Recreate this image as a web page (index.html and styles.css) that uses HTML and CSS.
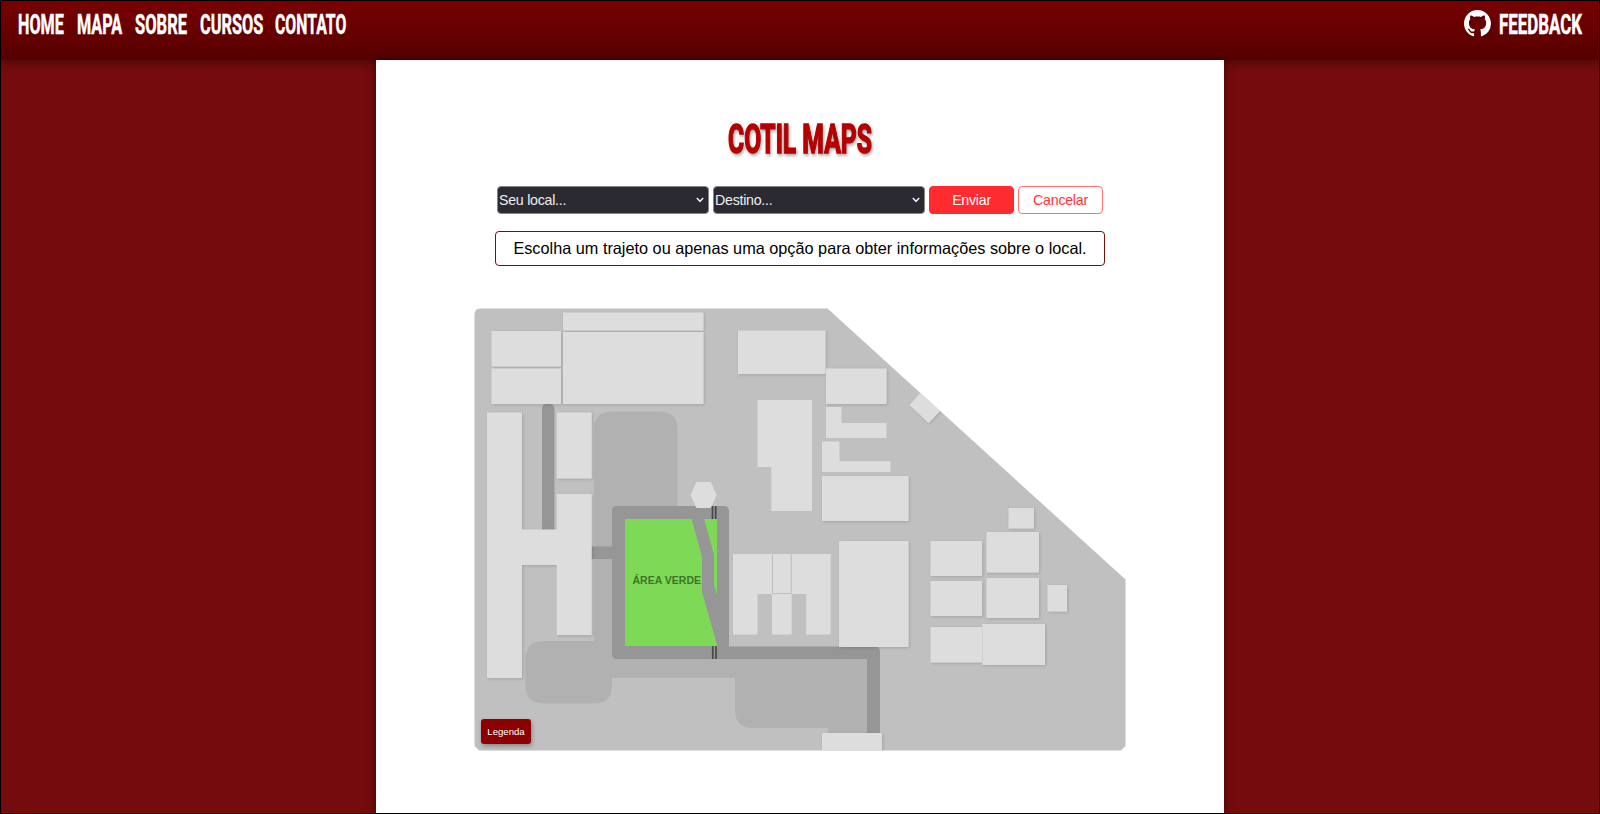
FILE: index.html
```
<!DOCTYPE html>
<html lang="pt-BR">
<head>
<meta charset="utf-8">
<title>Cotil Maps</title>
<link rel="stylesheet" href="styles.css">
</head>
<body>
<header class="topbar">
  <nav class="menu">
    <a><svg class="label" width="46" height="28"><text x="0" y="24" transform="scale(.62 1)" textLength="74" lengthAdjust="spacingAndGlyphs">HOME</text></svg></a>
    <a><svg class="label" width="45" height="28"><text x="0" y="24" transform="scale(.62 1)" textLength="73" lengthAdjust="spacingAndGlyphs">MAPA</text></svg></a>
    <a><svg class="label" width="52" height="28"><text x="0" y="24" transform="scale(.62 1)" textLength="84" lengthAdjust="spacingAndGlyphs">SOBRE</text></svg></a>
    <a><svg class="label" width="62" height="28"><text x="0" y="24" transform="scale(.62 1)" textLength="102" lengthAdjust="spacingAndGlyphs">CURSOS</text></svg></a>
    <a><svg class="label" width="72" height="28"><text x="0" y="24" transform="scale(.62 1)" textLength="115" lengthAdjust="spacingAndGlyphs">CONTATO</text></svg></a>
  </nav>
  <a class="feedback">
    <svg class="github" width="27" height="27" viewBox="0 0 16 16"><path fill="#fff" d="M8 0C3.58 0 0 3.58 0 8c0 3.54 2.29 6.53 5.47 7.59.4.07.55-.17.55-.38 0-.19-.01-.82-.01-1.49-2.01.37-2.53-.49-2.69-.94-.09-.23-.48-.94-.82-1.13-.28-.15-.68-.52-.01-.53.63-.01 1.08.58 1.23.82.72 1.21 1.87.87 2.33.66.07-.52.28-.87.51-1.07-1.78-.2-3.64-.89-3.64-3.95 0-.87.31-1.59.82-2.15-.08-.2-.36-1.02.08-2.12 0 0 .67-.21 2.2.82.64-.18 1.32-.27 2-.27s1.36.09 2 .27c1.53-1.04 2.2-.82 2.2-.82.44 1.1.16 1.92.08 2.12.51.56.82 1.27.82 2.15 0 3.07-1.87 3.75-3.65 3.95.29.25.54.73.54 1.48 0 1.07-.01 1.93-.01 2.2 0 .21.15.46.55.38A8.01 8.01 0 0 0 16 8c0-4.42-3.58-8-8-8z"/></svg>
    <svg class="label" width="84" height="28"><text x="0" y="24" transform="scale(.62 1)" textLength="134" lengthAdjust="spacingAndGlyphs">FEEDBACK</text></svg>
  </a>
</header>
<main class="page">
  <h1 class="title"><svg width="144" height="42"><text x="0" y="35" transform="scale(.62 1)" textLength="232" lengthAdjust="spacingAndGlyphs">COTIL MAPS</text></svg></h1>
  <form class="route">
    <div class="select">Seu local...<svg width="8" height="6"><path d="M.8 1 4 4.3 7.2 1"/></svg></div>
    <div class="select">Destino...<svg width="8" height="6"><path d="M.8 1 4 4.3 7.2 1"/></svg></div>
    <button type="button" class="btn send">Enviar</button>
    <button type="button" class="btn cancel">Cancelar</button>
  </form>
  <p class="hint">Escolha um trajeto ou apenas uma opção para obter informações sobre o local.</p>
  <div class="map">
    <svg class="plan" width="652" height="443" viewBox="474 308 652 443">
      <defs>
        <clipPath id="ground"><path d="M480.500 308.500H827.500L1125.500 579.500V746L1121 750.500H479L474.500 746V314.500Q474.500 308.500 480.500 308.500Z"/></clipPath>
        <filter id="soft" filterUnits="userSpaceOnUse" x="474" y="308" width="652" height="443"><feDropShadow dx="1" dy="1" stdDeviation="1.700" flood-opacity=".15"/></filter>
      </defs>
      <g clip-path="url(#ground)">
        <rect class="soil" x="474" y="308" width="652" height="443"/>
        <g class="yard">
          <path d="M594 430Q594 411.500 612.500 411.500H659Q677.500 411.500 677.500 430V510H650V650H867V733H828V728H753Q735 728 735 710V678H612V685Q612 703.500 594 703.500H544Q525.500 703.500 525.500 685V659Q525.500 641 544 641H594Z"/>
        </g>
        <g class="road">
          <path d="M542 530V409Q542 404 547 404H549.500Q554.500 404 554.500 409V530Z"/>
          <rect x="591" y="546.500" width="23" height="12.500"/>
          <path d="M617 506H724Q729 506 729 511V646.500H875Q880 646.500 880 651.500V734H867V659H617Q612 659 612 654V511Q612 506 617 506Z"/>
        </g>
        <rect class="grass" x="625" y="519" width="92" height="127"/>
        <text class="grass-name" x="632.500" y="584" textLength="68.500" lengthAdjust="spacingAndGlyphs">ÁREA VERDE</text>
        <path class="road" d="M691.500 518.500H704L714 555V585L717.500 597V646.500L702 592V557Z"/>
        <path class="rail" d="M712.500 506v13M715.700 506v13M712.800 646v13M716 646v13"/>
        <g class="building" filter="url(#soft)">
          <rect x="563" y="312.500" width="140.500" height="18"/>
          <rect x="563" y="332" width="140.500" height="72"/>
          <rect x="491.500" y="331" width="69.500" height="35.500"/>
          <rect x="491.500" y="368.500" width="69.500" height="35.500"/>
          <path d="M487 412.500h35v117h34.700V494h35v141h-35v-70h-34.700v113h-35z"/>
          <rect x="556.700" y="412.500" width="35" height="66"/>
          <rect x="738" y="330.500" width="87.500" height="43.500"/>
          <rect x="826" y="368.500" width="60.500" height="35.500"/>
          <rect x="822" y="476" width="86.500" height="45"/>
          <rect x="839" y="541" width="69.500" height="106"/>
          <path d="M909.500 405 928.500 423 945 406 924 389Z"/>
          <rect x="822" y="733" width="60" height="20"/>
          <rect x="930.500" y="541" width="51.500" height="35"/>
          <rect x="930.500" y="581" width="51.500" height="35"/>
          <rect x="930.500" y="627" width="51.500" height="35.500"/>
          <rect x="986.500" y="532" width="52.500" height="40.500"/>
          <rect x="986.500" y="578" width="52.500" height="40"/>
          <rect x="982.300" y="624" width="62.700" height="41"/>
          <rect x="1008.500" y="508" width="25.500" height="20.500"/>
          <rect x="1047.500" y="585" width="19.500" height="26.500"/>
        </g>
        <g class="building">
          <path d="M826 407h15.500v16h45v15H826z"/>
          <path d="M822 441.500h17.500v19.800h51V472H822z"/>
          <path d="M757.500 400H812v111h-40.700v-44h-13.800z"/>
          <path d="M733 554h97.700v80.500h-24.500V594h-14.500v40.500H772V594h-14.500v40.500H733z"/>
          <path d="M696.500 482h14.200l6 13-6 13h-14.200l-6-13z"/>
        </g>
        <path class="seam" d="M772.500 554v39.500h18.800V554"/>
      </g>
    </svg>
    <button type="button" class="legend">Legenda</button>
  </div>
</main>
</body>
</html>
```
FILE: styles.css
```
* { box-sizing: border-box; }
body {
  margin: 0;
  height: 814px;
  display: flex;
  flex-direction: column;
  overflow: hidden;
  border: 1px solid #000;
  background: #750b0c;
  font-family: "Liberation Sans", Arial, sans-serif;
}
.topbar {
  flex: none;
  height: 59px;
  padding: 9px 16px 0 17px;
  display: flex;
  justify-content: space-between;
  align-items: flex-start;
  background: linear-gradient(#780000, #560000);
  box-shadow: 0 2px 10px rgba(0, 0, 0, .4);
}
.menu { display: flex; gap: 13px; }
.feedback { display: flex; gap: 8px; }
.label { display: block; overflow: visible; }
.label text {
  font: 700 27.500px Roboto, sans-serif;
  fill: #fff;
  stroke: #fff;
  stroke-width: .5;
}
.github { display: block; filter: drop-shadow(1px 1px 1px rgba(0, 0, 0, .3)); }
.page {
  position: relative;
  flex: 1;
  width: 848px;
  margin: 0 auto;
  padding-top: 58px;
  display: flex;
  flex-direction: column;
  align-items: center;
  background: #fff;
  box-shadow: 0 0 8px rgba(0, 0, 0, .5);
}
.title { margin: 0; height: 42px; line-height: 0; }
.title svg { overflow: visible; filter: drop-shadow(1px 2px 1.500px rgba(0, 0, 0, .35)); }
.title text {
  font: 700 41.500px Roboto, sans-serif;
  fill: #b40000;
  stroke: #b40000;
  stroke-width: 1.600;
}
.route { display: flex; gap: 4px; margin-top: 26px; }
.select {
  width: 212px;
  height: 28px;
  padding: 0 4px 0 1px;
  display: flex;
  align-items: center;
  justify-content: space-between;
  border: 1px solid #85858c;
  border-radius: 4px;
  background: #2b2a33;
  color: #eee;
  font-size: 14.200px;
  letter-spacing: -.25px;
}
.select path { fill: none; stroke: #eee; stroke-width: 1.500; }
.btn {
  width: 85px;
  height: 28px;
  padding: 0;
  border: 1px solid #ff2c2f;
  border-radius: 4px;
  font: 14.200px "Liberation Sans", Arial, sans-serif;
  letter-spacing: -.25px;
}
.send { background: #ff2c2f; color: #fff; }
.cancel { background: #fff; color: #ff3537; border-color: #ff7475; }
.hint {
  width: 610px;
  height: 35px;
  margin: 17px 0 0;
  border: 1px solid #701010;
  border-radius: 4px;
  line-height: 33px;
  text-align: center;
  font-size: 16.270px;
  color: #000;
}
.map { position: relative; margin-top: 42px; width: 652px; height: 443px; }
.plan { display: block; }
.soil { fill: #c0c0c0; }
.yard { fill: #b1b1b1; }
.road { fill: #969696; }
.grass { fill: #7ed957; }
.grass-name { font: bold 11px "Liberation Sans", Arial, sans-serif; fill: #3f7527; }
.rail { stroke: #484848; stroke-width: 1.700; }
.building { fill: #ddd; }
.seam { fill: none; stroke: #bdbdbd; stroke-width: 1; }
.legend {
  position: absolute;
  left: 7px;
  bottom: 7px;
  width: 50px;
  height: 25px;
  padding: 0;
  border: 0;
  border-radius: 3px;
  background: #8b0000;
  color: #fff;
  font: 9.600px "Liberation Sans", Arial, sans-serif;
  box-shadow: 1px 2px 4px rgba(0, 0, 0, .3);
}
```
